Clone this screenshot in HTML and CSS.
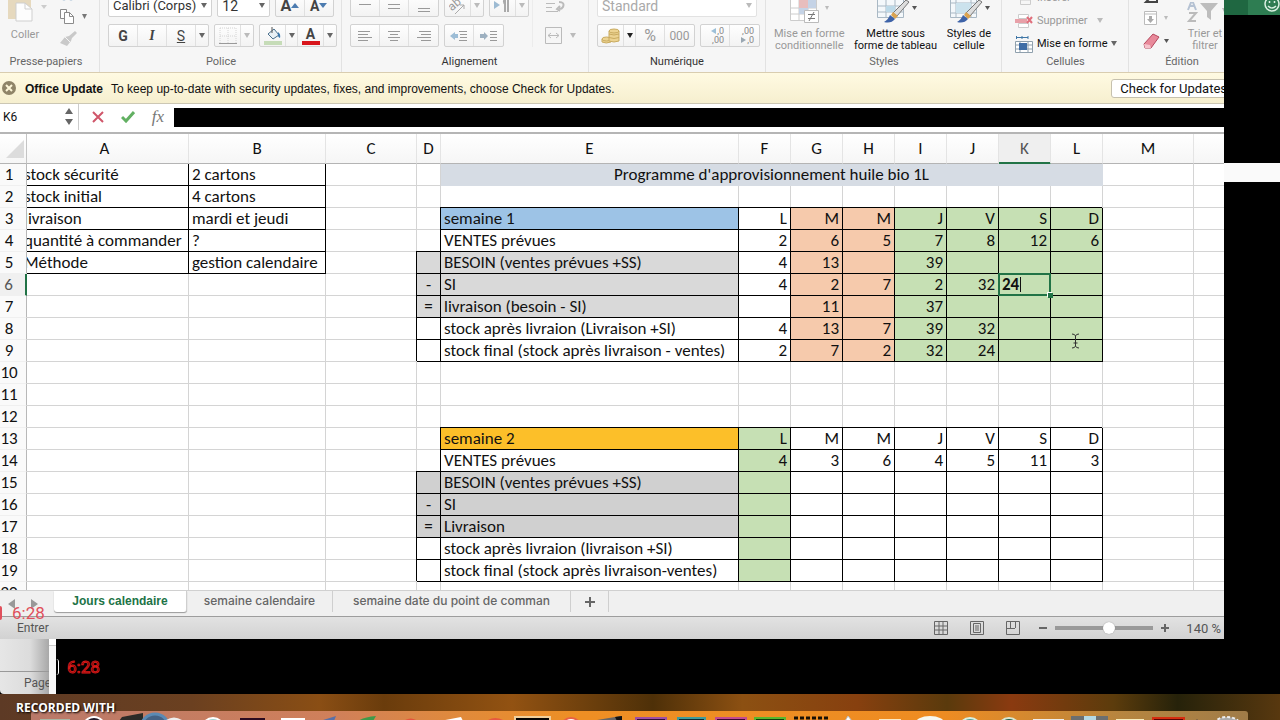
FILE: index.html
```html
<!DOCTYPE html>
<html lang="fr">
<head>
<meta charset="utf-8">
<title>Programme d'approvisionnement</title>
<link rel="stylesheet" href="styles.css">
</head>
<body>
<div class="screen">
<main class="window">
  <div class="ribbon">
    <section class="group g-clip">
      <div class="clip">
        <button class="tool dim paste">
          <svg width="44" height="24" viewBox="0 0 44 24"><path d="M5 0h23v20H5z" fill="#e6d9be"/><path d="M13 4h9l7 6v12H13z" fill="#fdfdfd" stroke="#cfcfcf"/><path d="M22 4v6h7" fill="none" stroke="#cfcfcf"/><path d="M38 6h6l-3 4z" fill="#ccc"/></svg>
          <span>Coller</span>
        </button>
        <div class="clip-side">
          <button class="ico" aria-label="Couper"><svg width="30" height="12" viewBox="0 0 30 12"><g fill="none" stroke="#5f8fb8" stroke-width="1.5"><circle cx="5" cy="8" r="2.5"/><circle cx="12" cy="8" r="2.5"/><path d="M6 6l4-6M11 6L7 0"/></g></svg></button>
          <button class="ico" aria-label="Copier"><svg width="30" height="18" viewBox="0 0 30 18"><g fill="#fff" stroke="#8b8b8b"><path d="M1.500 2.500h6v9h-6z"/><path d="M5.500 5.500h5l4 4v7h-9z"/><path d="M10.500 5.500v4h4" fill="none"/></g><path d="M23 7h5l-2.500 5z" fill="#777"/></svg></button>
          <button class="ico" aria-label="Reproduire"><svg width="30" height="16" viewBox="0 0 30 16"><path d="M16 0l-6 5-4 1-5 6 7 3 4-5 1-3 5-5z" fill="#c9c9c9"/><path d="M6 6l5 5" stroke="#f5f5f5"/></svg></button>
        </div>
      </div>
      <h2>Presse-papiers</h2>
    </section>
    <section class="group g-font">
      <div class="line">
        <button class="box combo w-name">Calibri (Corps)<i class="dn"></i></button>
        <button class="box combo w-size">12<i class="dn"></i></button>
        <div class="box seg2 big"><button>A<i class="tri up"></i></button><button><small>A</small><i class="tri"></i></button></div>
      </div>
      <div class="line">
        <div class="box seg"><button><b>G</b></button><button><b class="it">I</b></button><button><u>S</u></button><button class="nar" aria-label="Options"><i class="dn"></i></button></div>
        <div class="box seg"><button class="w26" aria-label="Bordures"><svg width="18" height="18" viewBox="0 0 18 18"><path d="M1 1h16v16M1 1v16M9 1v16M1 9h16" fill="none" stroke="#d4d4d4" stroke-dasharray="1 1"/><path d="M0 16.500h18" stroke="#999"/></svg></button><button class="nar" aria-label="Options"><i class="dn pale"></i></button></div>
        <div class="box seg"><button class="w26" aria-label="Remplissage"><svg width="20" height="20" viewBox="0 0 20 20"><path d="M5 8l6-5 5 6-6 4z" fill="#e9f0f5" stroke="#4a6f8c"/><path d="M9 1v6" stroke="#555"/><path d="M15 6q3 2 2 6-3-1-2-6" fill="#3d78ad"/><path d="M1 15h18v4H1z" fill="#c6dcb8"/></svg></button><button class="nar" aria-label="Options"><i class="dn"></i></button><button class="w26" aria-label="Couleur du texte"><span class="fc">A</span></button><button class="nar" aria-label="Options"><i class="dn"></i></button></div>
      </div>
      <h2>Police</h2>
    </section>
    <section class="group g-align">
      <div class="align">
        <div class="al-left">
          <div class="line">
            <div class="box seg"><button aria-label="Haut"><svg width="14" height="14" viewBox="0 0 14 14"><path d="M1 5.500h12" stroke="#999"/></svg></button><button aria-label="Milieu"><svg width="14" height="14" viewBox="0 0 14 14"><path d="M1 5.500h12M1 9.500h12" stroke="#999"/></svg></button><button aria-label="Bas"><svg width="14" height="14" viewBox="0 0 14 14"><path d="M1 9.500h12M1 12.500h12" stroke="#999"/></svg></button></div>
            <div class="box seg"><button class="w26 dimtx" aria-label="Orientation"><svg width="18" height="18" viewBox="0 0 18 18"><text x="0" y="11" transform="rotate(-40 6 9)" class="ab">ab</text><path d="M6 17L15 8M11 8h4v4" fill="none" stroke="#aaa"/></svg></button><button class="nar" aria-label="Options"><i class="dn pale"></i></button></div>
            <div class="box seg"><button class="w26" aria-label="Sens"><svg width="20" height="18" viewBox="0 0 20 18"><path d="M1 4l6 4-6 4z" fill="#9dbbd3"/><path d="M12 2v13M15 2v13" stroke="#aaa" stroke-width="2"/><path d="M12 1a4 4 0 000 7z" fill="#aaa"/></svg></button><button class="nar" aria-label="Options"><i class="dn pale"></i></button></div>
          </div>
          <div class="line">
            <div class="box seg"><button aria-label="Gauche"><svg width="16" height="14" viewBox="0 0 16 14"><path d="M1 2.500h12M1 5.500h10M1 8.500h14M1 11.500h10" stroke="#999"/></svg></button><button aria-label="Centre"><svg width="16" height="14" viewBox="0 0 16 14"><path d="M2 2.500h12M4 5.500h8M2 8.500h12M4 11.500h8" stroke="#999"/></svg></button><button aria-label="Droite"><svg width="16" height="14" viewBox="0 0 16 14"><path d="M3 2.500h12M5 5.500h10M1 8.500h14M5 11.500h10" stroke="#999"/></svg></button></div>
            <div class="box seg"><button aria-label="Diminuer le retrait"><svg width="18" height="14" viewBox="0 0 18 14"><path d="M0 7l5-4v2h3v4H5v2z" fill="#9dbdd6"/><path d="M9 2.500h8M10 5.500h7M10 8.500h7M9 11.500h8" stroke="#999"/></svg></button><button aria-label="Augmenter le retrait"><svg width="18" height="14" viewBox="0 0 18 14"><path d="M8 7L4 3v2H0v4h4v2z" fill="#9db0c0"/><path d="M10 2.500h7M10 5.500h7M10 8.500h7M10 11.500h7" stroke="#999"/></svg></button></div>
          </div>
        </div>
        <div class="al-right">
          <svg width="20" height="16" viewBox="0 0 20 16"><path d="M1 5.500h9M1 9.500h6M1 13.500h12" stroke="#bbb"/><path d="M14 4q6 0 4 5-1 2-4 2M15 8l-3 3 3 2" fill="none" stroke="#bbb" stroke-width="2"/></svg>
          <div class="merge"><svg width="17" height="17" viewBox="0 0 17 17"><path d="M.5.5h16v16H.5zM3 8.500h11M6 6L3 8.500 6 11M11 6l3 2.500-3 2.500" fill="none" stroke="#bbb"/></svg><i class="dn pale"></i></div>
        </div>
      </div>
      <h2 class="dark">Alignement</h2>
    </section>
    <section class="group g-num">
      <div class="line"><button class="box combo w-std">Standard<i class="dn pale"></i></button></div>
      <div class="line spread">
        <div class="box seg"><button class="w26" aria-label="Monnaie"><svg width="20" height="18" viewBox="0 0 20 18"><g fill="#ecd391" stroke="#c9ab60"><path d="M1 12v3q4 2 9 0v-3z"/><ellipse cx="5.500" cy="12" rx="4.500" ry="2"/><path d="M8 10v4q5 2 10 0V4H8z"/><path d="M8 7q5 2 10 0M8 10.500q5 2 10 0" fill="none"/><ellipse cx="13" cy="4" rx="5" ry="2"/></g></svg></button><button class="nar" aria-label="Options"><i class="dn blk"></i></button><button class="gr pct">%</button><button class="gr">000</button></div>
        <div class="box seg"><button class="dec" aria-label="Ajouter une décimale"><span><i class="al"></i>,0</span><span>,00</span></button><button class="dec" aria-label="Réduire les décimales"><span>,00</span><span><i class="ar"></i>,0</span></button></div>
      </div>
      <h2 class="dark">Numérique</h2>
    </section>
    <section class="group g-style">
      <div class="tools">
        <button class="tool dim"><svg width="42" height="24" viewBox="0 0 42 24"><path d="M2.500 0v20.500h26V0M11 0v20M20 0v20M2 8h26M2 14h26" fill="#fff" stroke="#ccc"/><path d="M11 0h9v8h-9z" fill="#e8bdbd"/><path d="M11 8h9v6h-9zM20 0h8v8h-8z" fill="#c5d3e6"/><path d="M16.500 10.500h14v12h-14z" fill="#fff" stroke="#bbb"/><path d="M20 14.500h7M20 18.500h7M26 12l-5 9" stroke="#777"/><path d="M37 6h4l-2 4z" fill="#bbb"/></svg><span>Mise en forme<br>conditionnelle</span></button>
        <button class="tool"><svg width="42" height="24" viewBox="0 0 42 24"><path d="M2.500 0v17.500h26V0M11 0v17M20 0v17M2 6h26M2 12h26" fill="#f4f8fb" stroke="#a9b8c4"/><path d="M11 6h9v6h-9z" fill="#bcd9e8"/><path d="M31 0l3 2-12 14-4-3z" fill="#ddd" stroke="#777"/><path d="M18 12l5 4-3 3-4-4z" fill="#dba34f"/><path d="M15 15l5 4q-4 5-11 3 4-2 6-7" fill="#3e63a8"/><path d="M37 6h5l-2.500 4z" fill="#555"/></svg><span>Mettre sous<br>forme de tableau</span></button>
        <button class="tool"><svg width="42" height="24" viewBox="0 0 42 24"><path d="M2.500 0v17.500h26V0M8 0v17M23 0v17M2 3h26M2 13h26" fill="#f4f8fb" stroke="#a9b8c4"/><path d="M8 3h15v10H8z" fill="#cbe2ed"/><path d="M31 0l3 2-12 14-4-3z" fill="#ddd" stroke="#777"/><path d="M18 12l5 4-3 3-4-4z" fill="#dba34f"/><path d="M15 15l5 4q-4 5-11 3 4-2 6-7" fill="#3e63a8"/><path d="M37 6h5l-2.500 4z" fill="#555"/></svg><span>Styles de<br>cellule</span></button>
      </div>
      <h2>Styles</h2>
    </section>
    <section class="group g-cell">
      <div class="cells">
        <button class="row dim"><svg width="18" height="16" viewBox="0 0 18 16"><path d="M5.500 5.500h10v9h-10zM5 10h10" fill="none" stroke="#ccc"/></svg>Insérer</button>
        <button class="row dim"><svg width="18" height="16" viewBox="0 0 18 16"><path d="M3.500 1.500h10v4h-10zM3.500 10.500h10v4h-10z" fill="#fff" stroke="#ccc"/><path d="M0 6h12v4H0z" fill="#e8a0a8"/><path d="M12 4l5 6M17 4l-5 6" stroke="#e06f7c" stroke-width="2"/></svg>Supprimer<i class="dn pale"></i></button>
        <button class="row"><svg width="18" height="18" viewBox="0 0 18 18"><path d="M1 2.500h12M1.500 1v3M13 1v3M7 1v3" stroke="#3f76a6"/><path d="M.5 6.500h17v11H.5zM5 6v11M13 6v11M0 10h17M0 14h17" fill="#fff" stroke="#8fa0ad"/><path d="M4 8h8v7H4z" fill="#3f6da5"/></svg>Mise en forme<i class="dn"></i></button>
      </div>
      <h2>Cellules</h2>
    </section>
    <section class="group g-edit">
      <div class="edit">
        <div class="edit-side">
          <button class="ico" aria-label="Somme"><svg width="28" height="8" viewBox="0 0 28 8"><path d="M9 0L3 6h11V4" fill="none" stroke="#444" stroke-width="2"/></svg></button>
          <button class="ico" aria-label="Recopier"><svg width="28" height="16" viewBox="0 0 28 16"><path d="M1.500 1.500h12v13h-12zM1 4h12" fill="#fff" stroke="#bbb"/><path d="M6 6h3v3h2l-3.500 4L4 9h2z" fill="#aaa"/><path d="M21 6h4l-2 4z" fill="#bbb"/></svg></button>
          <button class="ico" aria-label="Effacer"><svg width="28" height="18" viewBox="0 0 28 18"><path d="M1 12L10 2l6 3-8 11-6 0z" fill="#e8899a" stroke="#b5475d"/><path d="M1 12l6 1 1 3H2z" fill="#f6c3cc"/><path d="M21 7h5l-2.500 4z" fill="#555"/></svg></button>
        </div>
        <button class="tool dim"><svg width="44" height="22" viewBox="0 0 44 22"><path d="M5 8l4-10 4 10M6 4h6" fill="none" stroke="#b5c2d3" stroke-width="2"/><path d="M6 11h7l-7 8h7" fill="none" stroke="#bbb" stroke-width="2"/><path d="M17 1h18l-7 8v9l-4-3V9z" fill="#bdbdbd"/><path d="M39 6h4l-2 4z" fill="#bbb"/></svg><span>Trier et<br>filtrer</span></button>
      </div>
      <h2>Édition</h2>
    </section>
  </div>

  <div class="update">
    <button class="ico" aria-label="Fermer"><svg width="17" height="16" viewBox="0 0 17 16"><circle cx="9" cy="7" r="7" fill="#8f8468"/><path d="M6 4l6 6M12 4l-6 6" stroke="#fdf6d8" stroke-width="2"/></svg></button>
    <strong>Office Update</strong>
    <span>To keep up-to-date with security updates, fixes, and improvements, choose Check for Updates.</span>
    <button class="check">Check for Updates</button>
  </div>

  <div class="formula">
    <div class="namebox"><input aria-label="Zone Nom" value="K6"><svg width="10" height="20" viewBox="0 0 10 20"><path d="M1 7l4-6 4 6zM1 12h8l-4 6z" fill="#666"/></svg></div>
    <button class="ico" aria-label="Annuler"><svg width="12" height="12" viewBox="0 0 12 12"><path d="M1 1l10 10M11 1L1 11" stroke="#d0566a" stroke-width="2"/></svg></button>
    <button class="ico" aria-label="Valider"><svg width="14" height="12" viewBox="0 0 14 12"><path d="M1 6l4 4 8-9" fill="none" stroke="#62b062" stroke-width="3"/></svg></button>
    <button class="ico fx">fx</button>
    <input class="fbar" aria-label="Barre de formule">
  </div>

  <div class="sheet">
    <table>
      <colgroup><col class="c-h"><col class="c-a"><col class="c-b"><col class="c-c"><col class="c-d"><col class="c-e"><col class="c-n"><col class="c-n"><col class="c-n"><col class="c-n"><col class="c-n"><col class="c-n"><col class="c-n"><col class="c-m"><col></colgroup>
      <thead><tr><th class="corner"><svg width="18" height="18" viewBox="0 0 18 18"><path d="M18 0v18H0z" fill="#dcdcdc"/></svg></th><th class="first">A</th><th>B</th><th>C</th><th>D</th><th>E</th><th>F</th><th>G</th><th>H</th><th>I</th><th>J</th><th class="sel">K</th><th>L</th><th>M</th><th></th></tr></thead>
      <tbody>
      <tr class="p"><th>1</th><td>stock sécurité</td><td>2 cartons</td><td></td><td></td><td colspan="8" class="title">Programme d'approvisionnement huile bio 1L</td><td></td><td></td></tr>
      <tr class="p"><th>2</th><td>stock initial</td><td>4 cartons</td><td></td><td></td><td></td><td></td><td></td><td></td><td></td><td></td><td></td><td></td><td></td><td></td></tr>
      <tr class="p w w1"><th>3</th><td>livraison</td><td>mardi et jeudi</td><td></td><td></td><td class="blue">semaine 1</td><td>L</td><td>M</td><td>M</td><td>J</td><td>V</td><td>S</td><td>D</td><td></td><td></td></tr>
      <tr class="p w w1"><th>4</th><td>quantité à commander</td><td>?</td><td></td><td></td><td>VENTES prévues</td><td>2</td><td>6</td><td>5</td><td>7</td><td>8</td><td>12</td><td>6</td><td></td><td></td></tr>
      <tr class="p w w1 s grey"><th>5</th><td>Méthode</td><td>gestion calendaire</td><td></td><td></td><td>BESOIN (ventes prévues +SS)</td><td>4</td><td>13</td><td></td><td>39</td><td></td><td></td><td></td><td></td><td></td></tr>
      <tr class="w w1 s grey"><th class="rsel">6</th><td></td><td></td><td></td><td>-</td><td>SI</td><td>4</td><td>2</td><td>7</td><td>2</td><td>32</td><td class="active"><input class="cell" aria-label="Cellule K6" value="24"><span class="caret"></span><span class="handle"></span></td><td></td><td></td><td></td></tr>
      <tr class="w w1 s grey"><th>7</th><td></td><td></td><td></td><td>=</td><td>livraison (besoin - SI)</td><td></td><td>11</td><td></td><td>37</td><td></td><td></td><td></td><td></td><td></td></tr>
      <tr class="w w1 s"><th>8</th><td></td><td></td><td></td><td></td><td>stock après livraion (Livraison +SI)</td><td>4</td><td>13</td><td>7</td><td>39</td><td>32</td><td></td><td></td><td></td><td></td></tr>
      <tr class="w w1 s"><th>9</th><td></td><td></td><td></td><td></td><td>stock final (stock après livraison - ventes)</td><td>2</td><td>7</td><td>2</td><td>32</td><td>24</td><td></td><td class="ptr"><svg width="9" height="16" viewBox="0 0 9 16"><path d="M1 1q3 0 3.500 2Q5 1 8 1M4.500 3v10M1 15q3 0 3.500-2 .5 2 3.500 2M2.500 10h4" fill="none" stroke="#333"/></svg></td><td></td><td></td></tr>
      <tr><th>10</th><td></td><td></td><td></td><td></td><td></td><td></td><td></td><td></td><td></td><td></td><td></td><td></td><td></td><td></td></tr>
      <tr><th>11</th><td></td><td></td><td></td><td></td><td></td><td></td><td></td><td></td><td></td><td></td><td></td><td></td><td></td><td></td></tr>
      <tr><th>12</th><td></td><td></td><td></td><td></td><td></td><td></td><td></td><td></td><td></td><td></td><td></td><td></td><td></td><td></td></tr>
      <tr class="w w2"><th>13</th><td></td><td></td><td></td><td></td><td class="gold">semaine 2</td><td>L</td><td>M</td><td>M</td><td>J</td><td>V</td><td>S</td><td>D</td><td></td><td></td></tr>
      <tr class="w w2"><th>14</th><td></td><td></td><td></td><td></td><td>VENTES prévues</td><td>4</td><td>3</td><td>6</td><td>4</td><td>5</td><td>11</td><td>3</td><td></td><td></td></tr>
      <tr class="w w2 s grey"><th>15</th><td></td><td></td><td></td><td></td><td>BESOIN (ventes prévues +SS)</td><td></td><td></td><td></td><td></td><td></td><td></td><td></td><td></td><td></td></tr>
      <tr class="w w2 s grey"><th>16</th><td></td><td></td><td></td><td>-</td><td>SI</td><td></td><td></td><td></td><td></td><td></td><td></td><td></td><td></td><td></td></tr>
      <tr class="w w2 s grey"><th>17</th><td></td><td></td><td></td><td>=</td><td>Livraison</td><td></td><td></td><td></td><td></td><td></td><td></td><td></td><td></td><td></td></tr>
      <tr class="w w2 s"><th>18</th><td></td><td></td><td></td><td></td><td>stock après livraion (livraison +SI)</td><td></td><td></td><td></td><td></td><td></td><td></td><td></td><td></td><td></td></tr>
      <tr class="w w2 s"><th>19</th><td></td><td></td><td></td><td></td><td>stock final (stock après livraison-ventes)</td><td></td><td></td><td></td><td></td><td></td><td></td><td></td><td></td><td></td></tr>
      <tr><th>20</th><td></td><td></td><td></td><td></td><td></td><td></td><td></td><td></td><td></td><td></td><td></td><td></td><td></td><td></td></tr>
      </tbody>
    </table>
  </div>

  <nav class="tabs">
    <div class="arrows"><svg width="34" height="14" viewBox="0 0 34 14"><path d="M9 2v10L2 7zM25 2v10l7-5z" fill="#999"/></svg></div>
    <button class="tab on">Jours calendaire</button>
    <button class="tab t2">semaine calendaire</button>
    <button class="tab t3">semaine date du point de comman</button>
    <button class="tab add" aria-label="Ajouter une feuille"><svg width="12" height="12" viewBox="0 0 12 12"><path d="M6 1v10M1 6h10" stroke="#666" stroke-width="2"/></svg></button>
    <span class="clock"><i></i>6:28</span>
  </nav>

  <footer class="status">
    <span class="mode">Entrer</span>
    <button class="ico" aria-label="Normal"><svg width="14" height="14" viewBox="0 0 14 14"><path d="M.5.5h13v13H.5zM5 0v14M9 0v14M0 5h14M0 9h14" fill="none" stroke="#666"/></svg></button>
    <button class="ico" aria-label="Mise en page"><svg width="14" height="14" viewBox="0 0 14 14"><path d="M.5.5h13v13H.5zM3.500 2.500h7v9h-7zM5 5h4M5 7h4M5 9h4" fill="none" stroke="#666"/></svg></button>
    <button class="ico" aria-label="Sauts de page"><svg width="14" height="14" viewBox="0 0 14 14"><path d="M.5.5h13v13H.5zM4.500 0v7M9.500 0v7M0 7.500h9" fill="none" stroke="#666"/></svg></button>
    <div class="zoom">
      <button class="ico" aria-label="Réduire"><svg width="10" height="10" viewBox="0 0 10 10"><path d="M1 5h8" stroke="#666" stroke-width="2"/></svg></button>
      <input type="range" min="0" max="100" value="56" aria-label="Zoom">
      <button class="ico" aria-label="Agrandir"><svg width="10" height="10" viewBox="0 0 10 10"><path d="M5 1v8M1 5h8" stroke="#666" stroke-width="2"/></svg></button>
    </div>
    <span class="pc">140 %</span>
  </footer>
</main>
<aside class="gutter">
  <div class="green"><svg width="16" height="14" viewBox="0 0 16 14"><g fill="none" stroke="#d9efe1" stroke-width="1.500"><circle cx="8" cy="4" r="7"/><path d="M4 6q4 4 8 0M5.500 1v2M10.500 1v2"/></g></svg></div>
  <div class="strip"></div>
</aside>
</div>

<div class="under">
  <div class="under-l"><div class="blank"></div><div class="pg">Page</div></div>
  <div class="under-p"></div>
  <div class="under-b"><i></i><span>6:28</span></div>
</div>

<div class="desk">
  <strong>RECORDED WITH</strong>
  <div class="dock">
    <svg viewBox="31 711 1218 9" preserveAspectRatio="xMinYMin slice" aria-hidden="true">
      <path d="M40 719h30v2H40z" fill="#a8b7a5"/><circle cx="94" cy="728" r="11" fill="#221a28" stroke="#fff" stroke-width="2"/><path d="M119 721l3-4 21-4v8z" fill="#2b2b28"/><circle cx="155" cy="728" r="14" fill="#456285" stroke="#5b8ab4" stroke-width="3"/><path d="M166 720q8-5 16 0v2h-16z" fill="#eee"/><circle cx="213" cy="729" r="11" fill="#9fd1cf" stroke="#fff" stroke-width="2"/><path d="M240 718h25v4h-25z" fill="#2b0b20"/><path d="M281 718h24v4h-24z" fill="#fff"/><path d="M320 721l16-5-2 5z" fill="#5870a8"/><path d="M358 721q6-4 18-5l-3 5z" fill="#3e9a49"/><path d="M405 720q6-3 11 0z" fill="#e5533d"/><path d="M440 721l21-4 2 4z" fill="#fff"/><path d="M488 720q7-4 15 0z" fill="#e75840"/>
      <path d="M515 717h35v5h-35z" fill="#050403" stroke="#f0cf9c" stroke-width="2"/><circle cx="571" cy="728" r="10" fill="#fff" stroke="#e86147" stroke-width="2"/><path d="M597 720l24-4v5h-24z" fill="#666"/><path d="M615 717l7-1v5h-5z" fill="#111"/>
      <path d="M636 718h30v4h-30z" fill="#321034" stroke="#9f4fa4" stroke-width="2"/><path d="M678 718h27v4h-27z" fill="#0c2a31" stroke="#3f9c9b" stroke-width="2"/><path d="M716 718h30v4h-30z" fill="#3c0a2e" stroke="#c44b8e" stroke-width="2"/><path d="M755 718h30v4h-30z" fill="#133c0a" stroke="#58b72e" stroke-width="2"/>
      <path d="M794 718h34" stroke="#171006" stroke-width="3" stroke-dasharray="4 2"/><path d="M845 721l3-5 4 5z" fill="#fff" stroke="#bbb"/><path d="M879 719h22v3h-22z" fill="#fbeac7"/><ellipse cx="930" cy="724" rx="15" ry="8" fill="#f6f8f1"/><circle cx="970" cy="729" r="11" fill="#55a19a" stroke="#d8efdf" stroke-width="2"/><circle cx="1009" cy="729" r="11" fill="#1b604c" stroke="#d8e5d0" stroke-width="2"/><path d="M1033 719h31v3h-31z" fill="#eee"/><path d="M1071 716h37v6h-37z" fill="#6c6f70"/><path d="M1084 716h12v6h-12z" fill="#b4d9e5"/><path d="M1116 719h28v3h-28z" fill="#f7edbd"/><path d="M1153 718h31v4h-31z" fill="#580604" stroke="#d52d10" stroke-width="2"/><path d="M1197 719v3" stroke="#654"/><ellipse cx="1227" cy="725" rx="13" ry="8" fill="#aaa" stroke="#eee" stroke-width="2" stroke-dasharray="3 2"/>
    </svg>
  </div>
</div>
</body>
</html>
```
FILE: styles.css
```css
* { box-sizing: border-box; }
body { margin: 0; height: 100vh; display: flex; flex-direction: column; background: #000; overflow: hidden; font-family: Roboto, "Liberation Sans", sans-serif; font-size: 12px; color: #111; }
button, input { font: inherit; color: inherit; margin: 0; padding: 0; border: 0; background: none; }
svg { display: block; flex: none; }
i { font-style: normal; }
.screen { flex: 1; min-height: 0; display: flex; }
.window { flex: 1; min-width: 0; display: flex; flex-direction: column; background: #fff; overflow: hidden; }

/* ribbon */
.ribbon { height: 73px; flex: none; display: flex; align-items: flex-end; overflow: hidden; background: #f6f6f6; border-bottom: 1px solid #d9cdb0; font-size: 11px; }
.group { flex: none; display: flex; flex-direction: column; gap: 8px; padding-bottom: 3px; height: 96px; justify-content: flex-end; box-shadow: inset -1px 0 #e2e2e2; }
.group h2 { margin: 0; font: 11px/14px Roboto, sans-serif; color: #666; text-align: center; }
.group h2.dark { color: #333; }
.g-clip { width: 100px; padding-right: 8px; }
.g-font { width: 242px; padding-left: 8px; padding-right: 8px; }
.g-align { width: 247px; padding-left: 8px; }
.g-num { width: 177px; padding-left: 8px; padding-right: 9px; }
.g-style { width: 236px; }
.g-cell { width: 127px; }
.g-edit { width: 106px; }
.clip { display: flex; gap: 8px; padding-left: 3px; }
.clip-side { display: flex; flex-direction: column; gap: 6px; padding-left: 4px; }
.ico { display: flex; align-items: center; justify-content: center; }
.tool { display: flex; flex-direction: column; align-items: center; gap: 4px; line-height: 12px; text-align: center; color: #111; }
.dim { color: #999; }
.paste { padding: 10px 0 3px; gap: 6px; }
.line { display: flex; gap: 5px; }
.spread { justify-content: space-between; }
.g-font, .g-num { gap: 7px; }
.g-font h2, .g-num h2 { margin-top: 1px; }
.box { height: 23px; display: flex; border: 1px solid #d2d2d2; border-radius: 2px; background: linear-gradient(#fefefe, #f3f3f3); }
.combo { align-items: center; justify-content: space-between; padding: 0 4px; background: #fff; font-size: 14px; color: #333; }
.w-name { width: 105px; font-size: 13px; white-space: nowrap; }
.w-size { width: 53px; }
.w-std { flex: 1; color: #aaa; border-color: #e2e2e2; }
.seg button, .seg2 button { width: 29px; display: flex; align-items: center; justify-content: center; border-right: 1px solid #e0e0e0; font-size: 14px; color: #444; }
.seg button:last-child, .seg2 button:last-child { border-right: 0; }
.seg .nar { width: 12px; }
.seg .w26 { width: 26px; }
.seg .gr { color: #999; font-size: 12px; }
.seg .pct { font-size: 16px; }
.big { width: 59px; }
.big button { font-size: 16px; font-weight: bold; }
.big small { font-size: 14px; }
.it { font: italic bold 14px "Liberation Serif", serif; }
.dn { flex: none; width: 0; border: 3px solid transparent; border-top: 5px solid #666; border-bottom: 0; }
.pale { border-top-color: #bbb; }
.blk { border-top-color: #222; }
.tri { border: 4px solid transparent; border-top: 5px solid #4d7cb0; border-bottom: 0; }
.tri.up { border-top: 0; border-bottom: 5px solid #4d7cb0; }
.fc { width: 18px; border-bottom: 4px solid #d8151b; line-height: 14px; font-weight: bold; }
.align { display: flex; justify-content: space-between; padding-right: 13px; }
.al-left { display: flex; flex-direction: column; gap: 7px; }
.al-right { display: flex; flex-direction: column; justify-content: space-between; padding: 4px 0 3px 12px; border-left: 1px solid #ececec; }
.merge { display: flex; align-items: center; gap: 8px; }
.ab { font: 12px Roboto, sans-serif; fill: #999; }
.seg .dec { flex-direction: column; font-size: 9px; line-height: 9px; color: #888; align-items: flex-end; padding-right: 5px; }
.dec span { display: flex; align-items: center; gap: 1px; }
.al { border: 3px solid transparent; border-right: 5px solid #9dc0d8; border-left: 0; }
.ar { border: 3px solid transparent; border-left: 5px solid #9aa7b2; border-right: 0; }
.tools { display: flex; justify-content: space-between; padding: 0 11px 0 8px; }
.group .tools + h2, .group .edit + h2 { margin-top: -5px; }
.cells { display: flex; flex-direction: column; gap: 6px; padding-left: 13px; }
.g-cell { gap: 3px; }
.row { display: flex; align-items: center; gap: 4px; height: 17px; white-space: nowrap; }
.row .pale { margin-left: 5px; }
.edit { display: flex; gap: 12px; align-items: flex-end; padding-left: 14px; }
.edit-side { display: flex; flex-direction: column; gap: 6px; padding-bottom: 2px; }

/* update notice */
.update { flex: none; height: 31px; display: flex; align-items: center; padding-top: 1px; background: linear-gradient(#fffae2, #f6efcf); border-bottom: 1px solid #ccc7b4; font-family: "Liberation Sans", sans-serif; white-space: nowrap; }
.update strong { margin: 0 8px; font-size: 12px; }
.update .check { margin-left: auto; margin-right: -16px; height: 19px; padding: 0 12px 0 8px; border: 1px solid #c6c1ae; border-radius: 3px; background: #fff; font: 13px Roboto, sans-serif; }

/* formula bar */
.formula { flex: none; height: 30px; display: flex; align-items: center; padding-bottom: 2px; border-bottom: 2px solid #b5b5b5; }
.namebox { width: 79px; height: 26px; display: flex; align-items: center; justify-content: space-between; padding: 0 4px 0 3px; border-right: 1px solid #ccc; }
.namebox input { width: 50px; }
.formula > .ico { margin-left: 12px; width: 14px; }
.formula .ico + .ico { margin-left: 16px; }
.formula .fx { font: italic 17px "Liberation Serif", serif; color: #777; }
.fbar { flex: 1; height: 19px; margin-left: 9px; background: #000; color: #fff; }

/* grid */
.sheet { flex: 1; min-height: 0; overflow: hidden; font: 17px/20px Carlito, Lato, sans-serif; }
table { table-layout: fixed; width: 100%; border-collapse: separate; border-spacing: 0; }
.c-h { width: 27px; } .c-a { width: 162px; } .c-b { width: 137px; } .c-c { width: 91px; } .c-d { width: 24px; } .c-e { width: 298px; } .c-n { width: 52px; } .c-m { width: 91px; }
td, th { height: 22px; padding: 0 3px; font-weight: normal; white-space: nowrap; overflow: hidden; border-right: 1px solid #d4d4d4; border-bottom: 1px solid #d4d4d4; text-align: left; }
thead th { height: 30px; padding: 0; text-align: center; background: linear-gradient(#fff, #f6f6f6); border-right-color: #e4e4e4; border-bottom-color: #b4b4b4; }
thead .first { padding-right: 6px; }
thead .sel { background: #efefef; color: #555; box-shadow: inset 0 -1px #217346; border-bottom-color: #217346; }
.corner svg { margin-left: 6px; }
thead .corner { border-right-color: #c4c4c4; }
tbody th { padding: 0 8px 0 0; text-align: center; background: #fafafa; border-right-color: #b8b8b8; border-bottom-color: #f0f0f0; overflow: visible; }
tbody .rsel { color: #555; background: #f0f0f0; border-right: 2px solid #217346; }
tbody td:nth-child(2) { text-indent: -6px; }
td:last-child, th:last-child { border-right: 0; }
.p td:nth-child(2), .p td:nth-child(3) { border-color: #000; }
.w td:nth-child(n+6):nth-child(-n+13), .s td:nth-child(5) { border-color: #000; box-shadow: -1px -1px #000; }
.w td:nth-child(n+7):nth-child(-n+13) { text-align: right; }
.s td:nth-child(5) { text-align: center; padding: 0; }
.w1 td:nth-child(8), .w1 td:nth-child(9) { background: #f6caac; }
.w1 td:nth-child(n+10):nth-child(-n+13), .w2 td:nth-child(7) { background: #c6e0b4; }
.grey td:nth-child(5), .grey td:nth-child(6) { background: #d9d9d9; }
.w2.grey td:nth-child(5), .w2.grey td:nth-child(6) { background: #d0d0d0; }
.w .blue { background: #9dc3e6; }
.w .gold { background: #fcbf29; }
td.title { background: #d6dce4; text-align: center; border-right-color: #d6dce4; border-bottom-color: #d6dce4; }
.w.w1 td.active:nth-child(12) { position: relative; z-index: 1; overflow: visible; padding: 0; text-align: left; }
.cell { display: block; width: 100%; height: 21px; padding-left: 3px; font-weight: 600; outline: 2px solid #217346; outline-offset: -1px; }
.caret { position: absolute; left: 21px; top: 3px; width: 1px; height: 15px; background: #111; }
.handle { position: absolute; right: -3px; bottom: -3px; width: 5px; height: 5px; background: #217346; box-shadow: -1px -1px #fff; }
.w .ptr:nth-child(13) { position: relative; overflow: visible; }
.ptr svg { position: absolute; left: 20px; top: -7px; }

/* sheet tabs */
.tabs { flex: none; height: 27px; display: flex; align-items: flex-start; position: relative; background: #f0f0f0; border-top: 1px solid #d0d0d0; border-bottom: 1px solid #9d9d9d; }
.arrows { width: 54px; padding: 6px 0 0 6px; }
.tab { height: 21px; color: #666; font: 500 12px Inter, sans-serif; padding: 0 0 2px; border-right: 1px solid #cfcfcf; white-space: nowrap; }
.tab.on { width: 133px; background: #fff; color: #217346; font-family: "Liberation Sans", sans-serif; font-weight: bold; border-radius: 0 0 3px 3px; box-shadow: 0 1px 1px #999; }
.t2 { width: 146px; }
.t3 { width: 238px; }
.add { width: 38px; display: flex; align-items: center; justify-content: center; padding: 0; }
.clock { position: absolute; left: 0; top: 12px; display: flex; align-items: center; gap: 10px; font-size: 17px; line-height: 20px; color: #e0505c; z-index: 1; }
.clock i { width: 2px; height: 14px; background: #e0505c; border-radius: 0 2px 2px 0; }

/* status bar */
.status { flex: none; height: 22px; display: flex; align-items: center; gap: 22px; padding-right: 3px; color: #555; background: linear-gradient(#e2e2e2, #d2d2d2); }
.mode { margin-right: auto; padding-left: 17px; }
.zoom { display: flex; align-items: center; gap: 7px; margin-left: -4px; }
.zoom input { appearance: none; width: 98px; height: 13px; margin: 0; background: linear-gradient(#999, #999) center / 100% 4px no-repeat; }
.zoom input::-webkit-slider-thumb { appearance: none; width: 12px; height: 12px; border-radius: 6px; background: #fff; box-shadow: 0 0 1px #777; }
.pc { margin-left: -6px; font-size: 13px; white-space: nowrap; }

/* area right of the window */
.gutter { flex: none; width: 56px; display: flex; flex-direction: column; gap: 148px; }
.green { height: 15px; overflow: hidden; display: flex; justify-content: flex-end; background: linear-gradient(90deg, #1f6741 24px, #2e7d52 24px); }
.strip { height: 19px; background: #fafafa; }

/* window behind */
.under { flex: none; height: 55px; display: flex; }
.under-l { width: 49px; display: flex; flex-direction: column; background: linear-gradient(90deg, #e6e6e6, #dcdcdc 30px, #a8a8a8); border-radius: 0 0 0 4px; overflow: hidden; }
.blank { height: 33px; border-bottom: 1px solid #999; }
.pg { padding-left: 24px; font-size: 12px; line-height: 22px; color: #555; }
.under-p { width: 7px; background: linear-gradient(#fff 6px, #ccc 6px, #ccc 7px, #f7f7f7 7px); }
.under-b { flex: 1; display: flex; align-items: center; gap: 8px; }
.under-b i { width: 3px; height: 16px; border-right: 1px solid #fff; border-radius: 0 8px 8px 0; }
.under-b span { font-size: 17px; color: #000; -webkit-text-stroke: 1px #d81818; }

/* desktop */
.desk { flex: none; height: 26px; position: relative; display: flex; align-items: flex-end; padding: 0 32px 0 31px; background: linear-gradient(90deg, #5d3a25, #6b4020 15%, #8a4e14 25%, #6a3c0c 30%, #925212 40%, #4e3008 51%, #8c5012 58%, #87400f 67%, #5a3a0c 74%, #8a3a10 79%, #5c3c0c 87%, #26220a 92%, #58380f); }
.desk strong { position: absolute; left: 16px; top: 6px; z-index: 1; color: #fff; font: bold 12px/16px "Open Sans", sans-serif; text-shadow: 1px 1px 2px #000; }
.dock { flex: 1; height: 9px; overflow: hidden; border-radius: 3px 3px 0 0; background: linear-gradient(90deg, #b9796a, #d0805a 25%, #e08a3c 35%, #ee8f24 45%, #ee8c22 75%, #b58540 90%, #a07c48); }
.dock svg { width: 100%; height: 9px; }
```
